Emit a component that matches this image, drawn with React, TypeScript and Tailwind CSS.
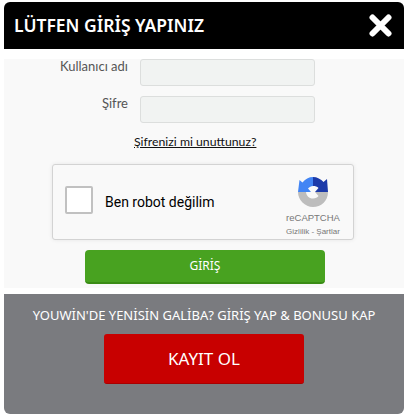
const sans = { fontFamily: '"Noto Sans", sans-serif' }
const lato = { fontFamily: 'Lato, sans-serif' }

const Field = (props: { label: string }): JSX.Element => {
  return (
    <div className="flex h-[27px] items-start">
      <label className="w-[124px] text-right text-[13px] leading-[14px] text-[#555]" style={lato}>{props.label}</label>
      <div className="ml-[12px] h-[27px] w-[175px] rounded-[3px] border border-[#dcdedd] bg-[#f1f3f2]" />
    </div>
  )
}

const RecaptchaLogo = (): JSX.Element => (
  <svg width="30" height="30" viewBox="0 0 30 30" className="block">
    <path d="M15 0 C19 0 23 2 25.500 5 L29 2 L30 15 L17 15 L20.500 11 C19 9.500 17.500 9 15 9 L12 6 Z" fill="#1c3aa9" />
    <path d="M15 0 L15 9 C13 9 11.500 10 10 11.500 L13 15 L0 15 L1.500 3 L4.500 5.500 C7 2 11 0 15 0 Z" fill="#4285f4" />
    <path d="M0 15 L8 15 C8.500 19 11 21.500 15 21.500 C17.500 21.500 19.500 20.500 20.500 19 L17 15 L30 15 C30 24 23 30 15 30 C7 30 0 23 0 15 Z" fill="#bdbdbd" />
  </svg>
)

const App = (): JSX.Element => {
  return (
    <div className="min-h-[414px] w-[408px] overflow-hidden bg-white pl-[4px] pt-[2px]" style={sans}>
      <div className="flex h-[47px] w-[400px] items-center justify-between rounded-t-[6px] bg-black pl-[10px] pr-[12px]">
        <span className="text-[17.500px] font-semibold leading-none text-white">LÜTFEN GİRİŞ YAPINIZ</span>
        <svg width="23" height="23" viewBox="0 0 23 23">
          <path d="M3.500 3.500 L19.500 19.500 M19.500 3.500 L3.500 19.500" stroke="#fff" strokeWidth="6" strokeLinecap="round" />
        </svg>
      </div>
      <div className="mt-[10px] flex h-[229px] w-[400px] flex-col bg-[#f9f9f9]">
        <div className="flex flex-col gap-[10px]">
          <Field label="Kullanıcı adı" />
          <Field label="Şifre" />
        </div>
        <a className="mt-[9px] ml-[130px] self-start text-[12.250px] leading-[20px] text-[#111] underline" style={lato}>Şifrenizi mi unuttunuz?</a>
        <div className="ml-[48px] mt-[12px] flex h-[76px] w-[302px] items-center rounded-[3px] border border-[#d3d3d3] bg-[#f9f9f9] shadow-[0_0_4px_rgba(0,0,0,0.08)]">
          <div className="mb-[4px] ml-[12px] h-[28px] w-[28px] rounded-[2px] border-2 border-[#c1c1c1] bg-white" />
          <span className="ml-[12px] text-[14px] text-black" style={{ fontFamily: 'Roboto, sans-serif' }}>Ben robot değilim</span>
          <div className="ml-auto mr-[12px] flex w-[56px] flex-col items-center pt-[10px]" style={{ fontFamily: '"Liberation Sans", sans-serif' }}>
            <RecaptchaLogo />
            <span className="mt-[4px] text-[9.500px] leading-[14px] text-[#777]">reCAPTCHA</span>
            <span className="mt-[1px] whitespace-nowrap text-[8px] leading-[12px] text-[#777]">Gizlilik - Şartlar</span>
          </div>
        </div>
        <button className="ml-[81px] mt-[10px] h-[34px] w-[240px] rounded-[4px] border-b-2 border-[#3a8c15] bg-[#48a220] text-[12px] text-white" style={sans}>GİRİŞ</button>
      </div>
      <div className="mt-[6px] flex h-[120px] w-[400px] flex-col items-center rounded-b-[6px] bg-[#7a7b7f] pt-[11px]">
        <span className="text-[13px] leading-[20px] text-white">YOUWİN'DE YENİSİN GALİBA? GİRİŞ YAP &amp; BONUSU KAP</span>
        <button className="mt-[9px] h-[50px] w-[200px] rounded-[3px] border-b border-[#a80000] bg-[#c80000] text-[17px] text-white" style={sans}>KAYIT OL</button>
      </div>
    </div>
  )
}

export default App
